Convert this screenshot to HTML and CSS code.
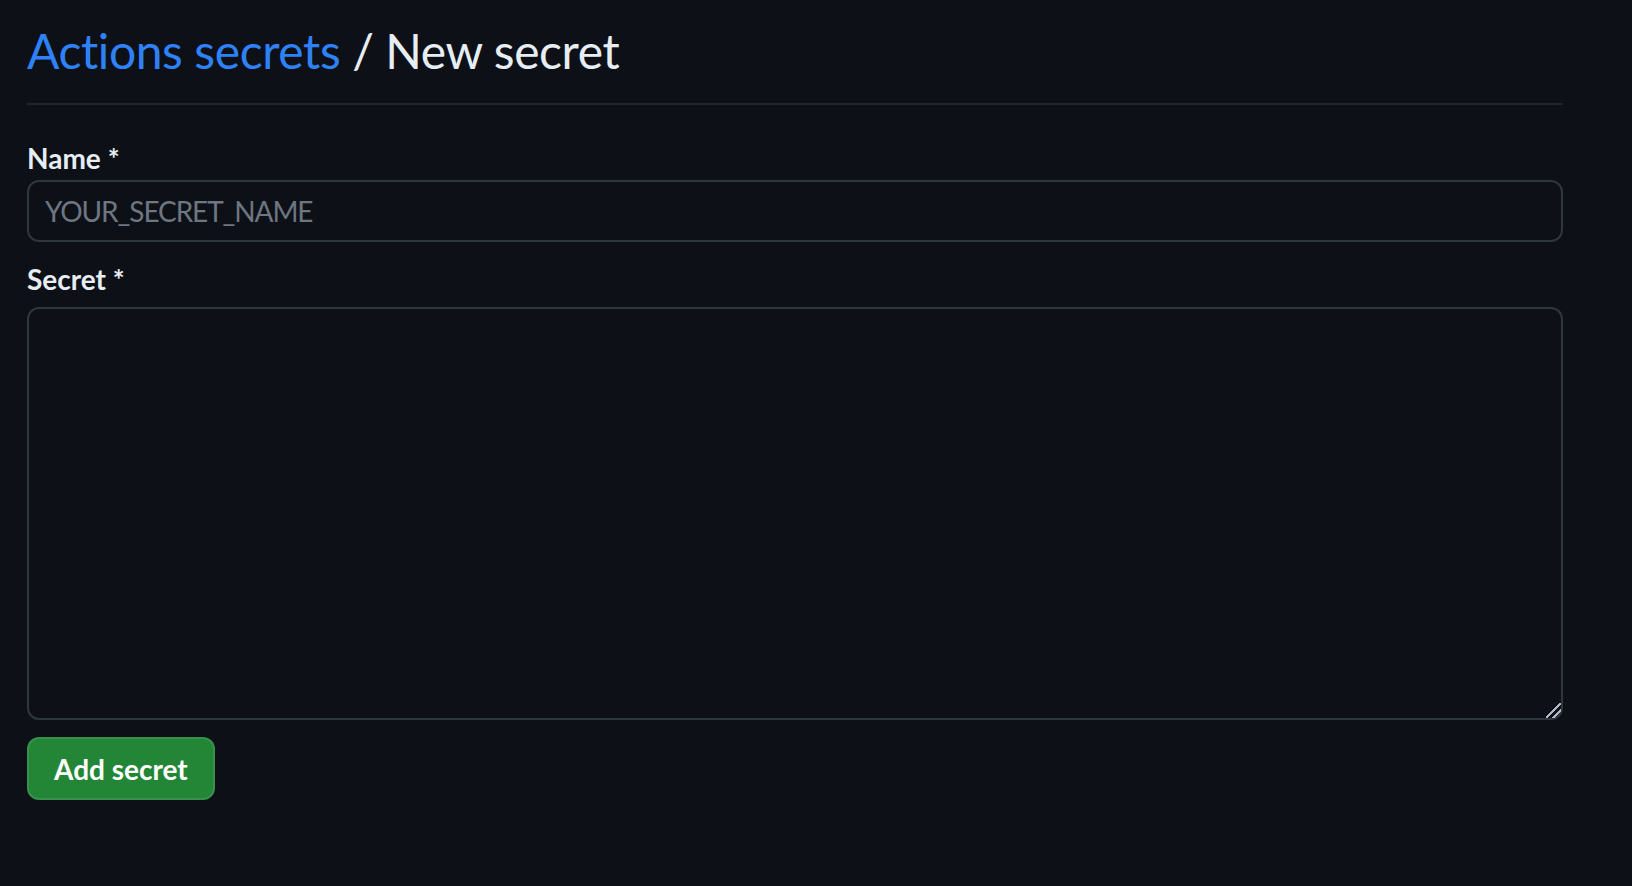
FILE: index.html
```html
<!DOCTYPE html>
<html lang="en">
<head>
    <meta charset="UTF-8">
    <meta name="viewport" content="width=device-width, initial-scale=1.0">
    <title>New secret</title>
    <link rel="stylesheet" href="styles.css">
</head>
<body>
    <div class="page">
        <!-- Hlavicka -->
        <div class="subhead">
            <h2 class="subhead-heading">
                <a href="#" class="crumb">Actions secrets</a> / New secret
            </h2>
        </div>

        <form class="secret-form">
            <div class="form-group">
                <label for="secretName">Name *</label>
                <input type="text" id="secretName" class="form-control" placeholder="YOUR_SECRET_NAME">
            </div>

            <div class="form-group">
                <label for="secretValue" class="label-secret">Secret *</label>
                <textarea id="secretValue" class="form-control textarea"></textarea>
            </div>

            <button type="submit" class="btn-primary">Add secret</button>
        </form>
    </div>
</body>
</html>
```

FILE: styles.css
```css
* { box-sizing: border-box;
}

html {
    color-scheme: dark;
}

body {
    margin: 0;
    background: #0d1117;
    color: #e6edf3;
    font-family: 'Lato', 'Noto Sans', sans-serif;
    font-variant-ligatures: none;
}

.page {
    width: 1536px;
    margin-left: 27px;
    padding-top: 15px;
}

.subhead {
    padding-bottom: 16px;
    border-bottom: 2px solid #21262d;
    margin-bottom: 32px;
}

.subhead-heading {
    margin: 0;
    font-size: 48px;
    line-height: 72px;
    font-weight: 400;
    letter-spacing: -0.4px;
    color: #e6edf3;
}

.crumb {
    color: #2f81f7;
    text-decoration: none;
}

label {
    display: block;
    font-size: 28px;
    line-height: 42px;
    font-weight: 700;
    color: #e6edf3;
}

.label-secret {
    margin-top: 16px;
    margin-bottom: 7px;
}

.form-control {
    display: block;
    width: 100%;
    height: 62px;
    margin-top: 1px;
    padding: 0 16px;
    font-family: inherit;
    font-size: 28px;
    color: #e6edf3;
    background: #0d1117;
    border: 2px solid #30363d;
    border-radius: 12px;
    outline: none;
}

.form-control::placeholder {
    color: #6e7681;
    letter-spacing: -1.1px;
}

.textarea {
    height: 413px;
    margin-top: 0;
    padding: 16px;
    resize: vertical;
}

.textarea::-webkit-resizer {
    background: linear-gradient(135deg,
        transparent 44%, #b1bac4 44%, #b1bac4 54%,
        transparent 54%, transparent 68%, #b1bac4 68%, #b1bac4 78%,
        transparent 78%);
}

.btn-primary {
    display: block;
    margin-top: 17px;
    height: 63px;
    padding: 0 25px;
    font-family: inherit;
    font-size: 28px;
    font-weight: 700;
    white-space: nowrap;
    color: #ffffff;
    background: #238636;
    border: 2px solid rgba(240, 246, 252, 0.1);
    border-radius: 12px;
    cursor: pointer;
}
```
